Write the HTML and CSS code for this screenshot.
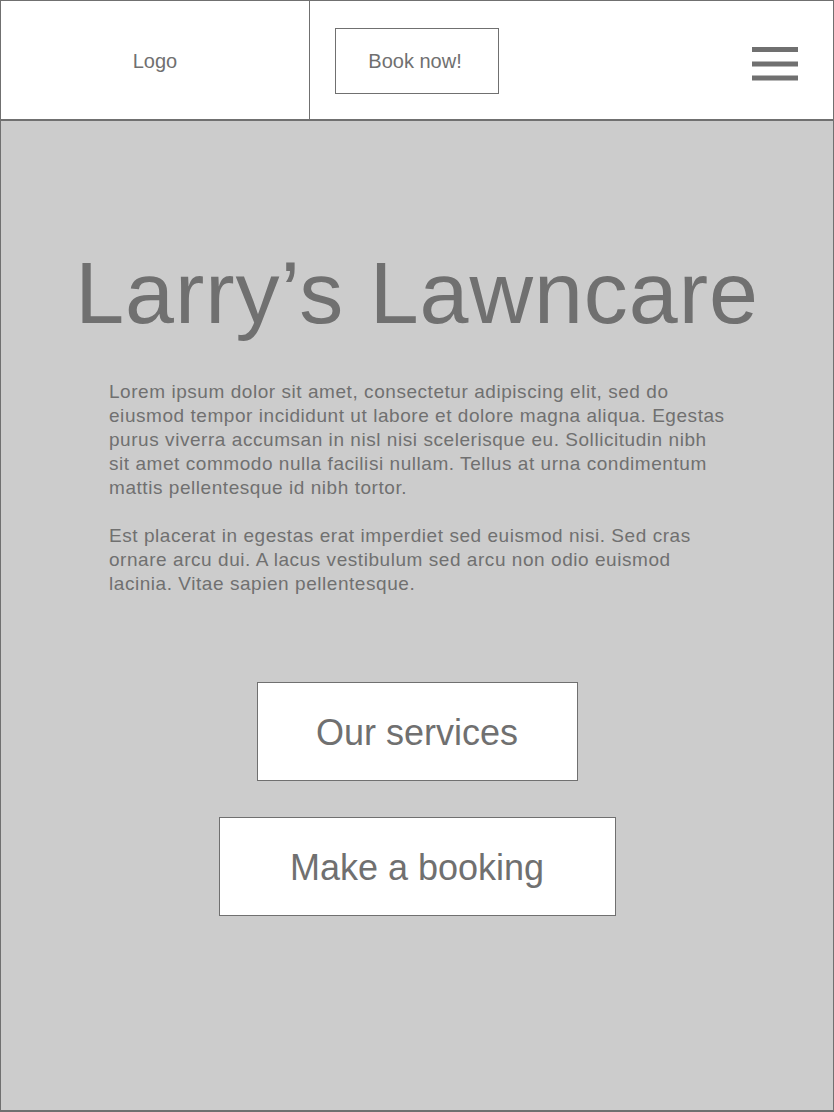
FILE: index.html
```html
<!DOCTYPE html>
<html lang="en">
<head>
<meta charset="utf-8">
<title>Larry's Lawncare</title>
<link rel="stylesheet" href="styles.css">
</head>
<body>
<div class="page">
  <header class="header">
    <div class="logo">Logo</div>
    <div class="nav">
      <a class="book-btn" href="#">Book now!</a>
      <button class="menu" aria-label="Menu">
        <svg width="46" height="34" viewBox="0 0 46 34" aria-hidden="true">
          <rect x="0" y="0" width="46" height="5" fill="#707070"/>
          <rect x="0" y="14.5" width="46" height="5" fill="#707070"/>
          <rect x="0" y="28.5" width="46" height="5" fill="#707070"/>
        </svg>
      </button>
    </div>
  </header>
  <main class="hero">
    <h1 class="title">Larry’s Lawncare</h1>
    <div class="copy">
      <p>Lorem ipsum dolor sit amet, consectetur adipiscing elit, sed do eiusmod tempor incididunt ut labore et dolore magna aliqua. Egestas purus viverra accumsan in nisl nisi scelerisque eu. Sollicitudin nibh sit amet commodo nulla facilisi nullam. Tellus at urna condimentum mattis pellentesque id nibh tortor.</p>
      <p>Est placerat in egestas erat imperdiet sed euismod nisi. Sed cras ornare arcu dui. A lacus vestibulum sed arcu non odio euismod lacinia. Vitae sapien pellentesque.</p>
    </div>
    <div class="actions">
      <a class="cta cta-services" href="#">Our services</a>
      <a class="cta cta-booking" href="#">Make a booking</a>
    </div>
  </main>
</div>
</body>
</html>
```

FILE: styles.css
```css
* { box-sizing: border-box; }

html, body {
  margin: 0;
  padding: 0;
}

body {
  font-family: "Liberation Sans", Arial, Helvetica, sans-serif;
  color: #707070;
  background: #cccccc;
}

.page {
  width: 834px;
  height: 1112px;
  border: 1px solid #707070;
  border-bottom-width: 2px;
  background: #cccccc;
  display: flex;
  flex-direction: column;
}

.header {
  height: 120px;
  background: #ffffff;
  border-bottom: 2px solid #707070;
  display: flex;
}

.logo {
  width: 309px;
  border-right: 1px solid #707070;
  display: flex;
  align-items: center;
  justify-content: center;
  font-size: 20px;
  padding-top: 3px;
}

.nav {
  flex: 1;
  display: flex;
  align-items: center;
  justify-content: space-between;
  padding: 0 35px 0 25px;
}

.book-btn {
  width: 164px;
  height: 66px;
  border: 1px solid #707070;
  display: flex;
  align-items: center;
  justify-content: center;
  font-size: 20px;
  color: #707070;
  text-decoration: none;
  margin-top: 1px;
  padding-right: 4px;
  padding-top: 1px;
}

.menu {
  border: 0;
  padding: 0;
  background: none;
  display: block;
  margin-top: 7px;
}

.menu svg { display: block; }

.hero {
  display: flex;
  flex-direction: column;
  align-items: center;
  padding-top: 128px;
}

.title {
  margin: 0;
  font-size: 88px;
  line-height: 88px;
  font-weight: normal;
  letter-spacing: 0.95px;
}

.copy {
  width: 640px;
  margin-top: 43px;
  padding-left: 16px;
  align-self: flex-start;
  margin-left: 92px;
  font-size: 19px;
  line-height: 24px;
  letter-spacing: 0.55px;
}

.copy p { margin: 0 0 24px; }
.copy p:last-child { margin-bottom: 0; }

.actions {
  margin-top: 86px;
  display: flex;
  flex-direction: column;
  align-items: center;
  gap: 36px;
}

.cta {
  height: 99px;
  background: #ffffff;
  border: 1px solid #707070;
  display: flex;
  align-items: center;
  justify-content: center;
  font-size: 36px;
  color: #707070;
  text-decoration: none;
  padding-top: 3px;
}

.cta-services { width: 321px; }
.cta-booking { width: 397px; }
```
